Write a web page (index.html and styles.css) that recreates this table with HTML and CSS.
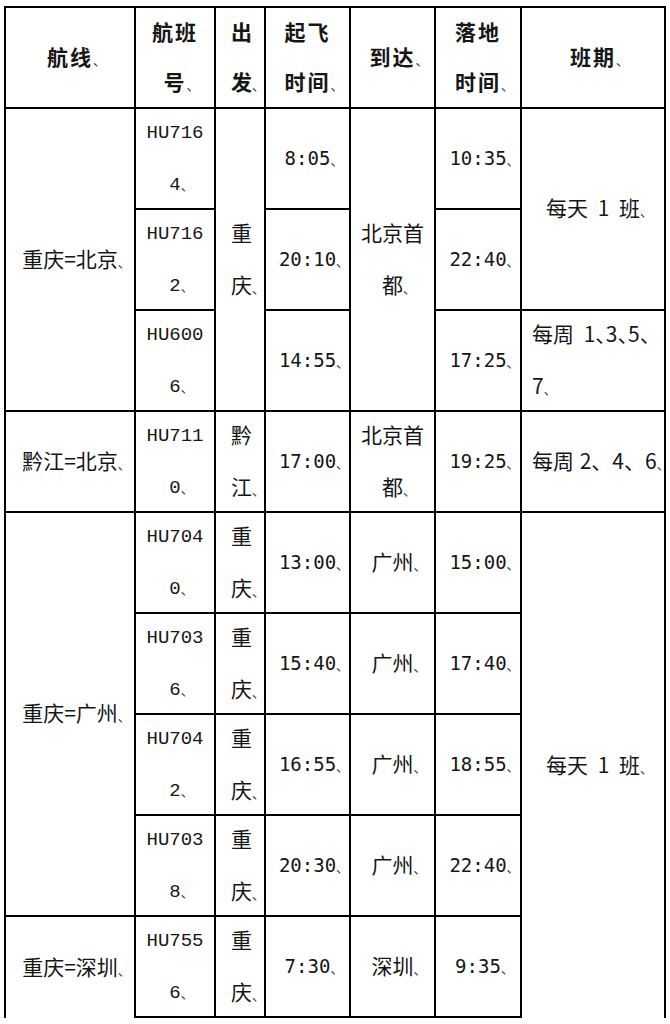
FILE: index.html
```html
<!DOCTYPE html>
<html lang="zh-CN">
<head>
<meta charset="utf-8">
<title>航班时刻表</title>
<link rel="stylesheet" href="styles.css">
</head>
<body>
<div class="sheet">
  <div class="c k1 h"><p>航线<span class="m">、</span></p></div>
  <div class="c k2 h"><p>航班号<span class="m">、</span></p></div>
  <div class="c k3 h"><p>出发<span class="m">、</span></p></div>
  <div class="c k4 h"><p>起飞时间<span class="m">、</span></p></div>
  <div class="c k5 h"><p>到达<span class="m">、</span></p></div>
  <div class="c k4 h"><p>落地时间<span class="m">、</span></p></div>
  <div class="c k7 h"><p>班期<span class="m">、</span></p></div>

  <div class="c k1 rs3"><p>重庆=北京<span class="m">、</span></p></div>
  <div class="c k2 num"><p>HU7164<span class="m">、</span></p></div>
  <div class="c k3 rs3"><p>重庆<span class="m">、</span></p></div>
  <div class="c k4 time"><p>8:05<span class="m">、</span></p></div>
  <div class="c k5 rs3"><p>北京首都<span class="m">、</span></p></div>
  <div class="c k4 time"><p>10:35<span class="m">、</span></p></div>
  <div class="c k7 rs2"><p>每天 1 班<span class="m">、</span></p></div>

  <div class="c k2 num"><p>HU7162<span class="m">、</span></p></div>
  <div class="c k4 time"><p>20:10<span class="m">、</span></p></div>
  <div class="c k4 time"><p>22:40<span class="m">、</span></p></div>

  <div class="c k2 num"><p>HU6006<span class="m">、</span></p></div>
  <div class="c k4 time"><p>14:55<span class="m">、</span></p></div>
  <div class="c k4 time"><p>17:25<span class="m">、</span></p></div>
  <div class="c k7 left half"><p>每周 1、3、5、7<span class="m">、</span></p></div>

  <div class="c k1"><p>黔江=北京<span class="m">、</span></p></div>
  <div class="c k2 num"><p>HU7110<span class="m">、</span></p></div>
  <div class="c k3"><p>黔江<span class="m">、</span></p></div>
  <div class="c k4 time"><p>17:00<span class="m">、</span></p></div>
  <div class="c k5"><p>北京首都<span class="m">、</span></p></div>
  <div class="c k4 time"><p>19:25<span class="m">、</span></p></div>
  <div class="c k7 left wide"><p>每周 2、4、6<span class="m">、</span></p></div>

  <div class="c k1 rs4"><p>重庆=广州<span class="m">、</span></p></div>
  <div class="c k2 num"><p>HU7040<span class="m">、</span></p></div>
  <div class="c k3"><p>重庆<span class="m">、</span></p></div>
  <div class="c k4 time"><p>13:00<span class="m">、</span></p></div>
  <div class="c k5"><p>广州<span class="m">、</span></p></div>
  <div class="c k4 time"><p>15:00<span class="m">、</span></p></div>
  <div class="c k7 rs5 open"><p>每天 1 班<span class="m">、</span></p></div>

  <div class="c k2 num"><p>HU7036<span class="m">、</span></p></div>
  <div class="c k3"><p>重庆<span class="m">、</span></p></div>
  <div class="c k4 time"><p>15:40<span class="m">、</span></p></div>
  <div class="c k5"><p>广州<span class="m">、</span></p></div>
  <div class="c k4 time"><p>17:40<span class="m">、</span></p></div>

  <div class="c k2 num"><p>HU7042<span class="m">、</span></p></div>
  <div class="c k3"><p>重庆<span class="m">、</span></p></div>
  <div class="c k4 time"><p>16:55<span class="m">、</span></p></div>
  <div class="c k5"><p>广州<span class="m">、</span></p></div>
  <div class="c k4 time"><p>18:55<span class="m">、</span></p></div>

  <div class="c k2 num"><p>HU7038<span class="m">、</span></p></div>
  <div class="c k3"><p>重庆<span class="m">、</span></p></div>
  <div class="c k4 time"><p>20:30<span class="m">、</span></p></div>
  <div class="c k5"><p>广州<span class="m">、</span></p></div>
  <div class="c k4 time"><p>22:40<span class="m">、</span></p></div>

  <div class="c k1 open"><p>重庆=深圳<span class="m">、</span></p></div>
  <div class="c k2 num"><p>HU7556<span class="m">、</span></p></div>
  <div class="c k3"><p>重庆<span class="m">、</span></p></div>
  <div class="c k4 time"><p>7:30<span class="m">、</span></p></div>
  <div class="c k5"><p>深圳<span class="m">、</span></p></div>
  <div class="c k4 time"><p>9:35<span class="m">、</span></p></div>
</div>
</body>
</html>
```

FILE: styles.css
```css
html, body {
  margin: 0;
  padding: 0;
  background: #ffffff;
}

.sheet {
  display: grid;
  grid-template-columns: 130px 80px 50px 85px 85px 86px 144px;
  grid-template-rows: repeat(10, 101px);
  width: max-content;
  margin: 6px 0 0 4px;
  border-top: 2px solid #000;
  border-left: 2px solid #000;
  color: #161616;
  font-family: "Noto Sans CJK SC", sans-serif;
  font-size: 21px;
}

.c {
  box-sizing: border-box;
  display: flex;
  flex-direction: column;
  justify-content: center;
  border-right: 2px solid #000;
  border-bottom: 2px solid #000;
  text-align: center;
  line-height: 52px;
}

.c p {
  margin: 0;
}

.rs2 { grid-row: span 2; }
.rs3 { grid-row: span 3; }
.rs4 { grid-row: span 4; }
.rs5 { grid-row: span 5; }

.open {
  border-bottom: none;
}

/* column paddings */
.k1 { padding: 0 4px; }
.k2 { padding: 0 6px; }
.k3 { padding: 0 12px 0 15px; }
.k4 { padding: 0 10px; }
.k5 { padding: 0 4px; }
.k7 { padding: 0 6px; }

/* header */
.h {
  font-weight: 700;
  line-height: 50px;
  letter-spacing: 2px;
}

.h.k3 {
  letter-spacing: 0;
}

/* flight numbers */
.num p {
  font-family: "Liberation Mono", "Noto Sans CJK SC", monospace;
  font-size: 19px;
  word-break: break-all;
}

/* times */
.time p {
  font-family: "DejaVu Sans Mono", "Noto Sans CJK SC", monospace;
  font-size: 19px;
}

/* schedule text */
.k7 p {
  word-spacing: 5px;
}

.left {
  text-align: left;
}

.left.half {
  padding: 0 11px 0 10px;
}

.left.half p {
  font-feature-settings: "halt" 1;
}

.left.wide {
  padding: 0 0 0 10px;
}

.left.wide p {
  word-spacing: 1px;
  white-space: nowrap;
}

/* paragraph mark: drawn after the text but takes no room */
.m {
  margin-right: -13px;
  font-family: "Noto Sans CJK SC", sans-serif;
  font-size: 13px;
  font-weight: 400;
  letter-spacing: 0;
  word-spacing: 0;
  color: #2a2a2a;
  font-feature-settings: normal;
}
```
